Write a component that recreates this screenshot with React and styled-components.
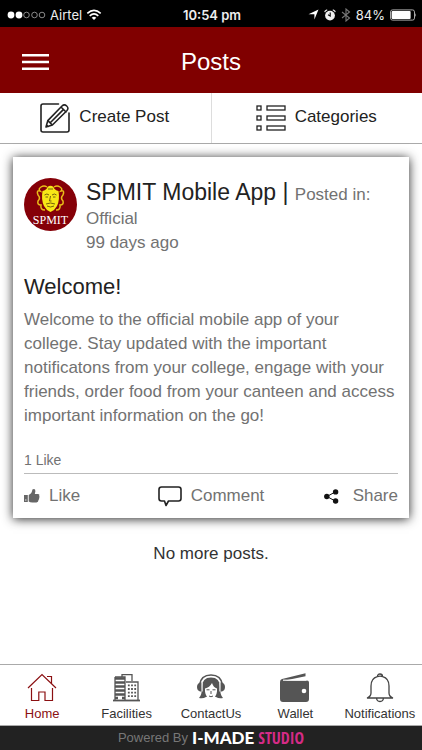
import React from "react";
import styled, { createGlobalStyle } from "styled-components";

const GlobalStyle = createGlobalStyle`
  * { box-sizing: border-box; }
  body { margin: 0; background: #fff; font-family: "Liberation Sans", Arial, sans-serif; color: #222; }
  button { font: inherit; color: inherit; background: none; border: 0; padding: 0; cursor: pointer; }
  h1, h2, h3, p { margin: 0; font-weight: 400; }
  a { text-decoration: none; color: inherit; }
  svg { display: block; flex: none; }
`;

const Page = styled.div`
  display: flex;
  flex-direction: column;
  min-height: 100vh;
`;

const StatusBar = styled.div`
  display: grid;
  grid-template-columns: 1fr auto 1fr;
  align-items: center;
  height: 27px;
  padding: 2px 5px 0 7px;
  background: #000;
  color: #eee;
  font-family: Inter, "Liberation Sans", sans-serif;
  font-size: 13px;
`;

const StatusGroup = styled.div`
  display: flex;
  align-items: center;
  justify-content: ${(p) => (p.$end ? "flex-end" : "flex-start")};
  gap: ${(p) => (p.$end ? 5 : 4)}px;
`;

const Clock = styled.span`
  font-weight: 600;
`;

const Header = styled.header`
  display: grid;
  grid-template-columns: 70px 1fr 70px;
  align-items: center;
  height: 66px;
  padding-top: 3px;
  background: #800000;
  color: #fff;
`;

const MenuButton = styled.button`
  justify-self: center;
`;

const PageTitle = styled.h1`
  text-align: center;
  font-size: 24px;
  line-height: 32px;
`;

const Actions = styled.div`
  display: flex;
  height: 51px;
  border-bottom: 1px solid #aaa;
`;

const ActionButton = styled.button`
  flex: 1;
  display: flex;
  align-items: center;
  justify-content: center;
  gap: 9px;
  padding-right: 1px;
  font-size: 17px;
  line-height: 24px;

  & + & { border-left: 1px solid #ddd; }
`;

const ActionLabel = styled.span`
  padding-bottom: 3px;
`;

const Feed = styled.main`
  flex: 1;
  padding: 13px 13px 24px;
`;

const Card = styled.article`
  padding: 21px 11px 10px;
  background: #fff;
  box-shadow: 0 1px 10px rgba(0, 0, 0, 0.85);
`;

const PostHead = styled.div`
  display: flex;
  gap: 9px;
`;

const PostMeta = styled.div`
  flex: 1;
  font-size: 17px;
  line-height: 24px;
  color: #727272;
`;

const Author = styled.span`
  font-size: 23px;
  line-height: 28px;
  color: #222;
`;

const PostTitle = styled.h2`
  margin-top: 18px;
  font-size: 22px;
  line-height: 28px;
`;

const PostBody = styled.p`
  margin-top: 7px;
  font-size: 17px;
  line-height: 24px;
  color: #727272;
`;

const LikeCount = styled.p`
  margin-top: 22px;
  padding-bottom: 3px;
  border-bottom: 1px solid #bbb;
  font-size: 14px;
  line-height: 20px;
  color: #727272;
`;

const PostActions = styled.div`
  display: grid;
  grid-template-columns: 1fr auto 1fr;
  margin-top: 10px;
`;

const PostButton = styled.button`
  display: flex;
  align-items: center;
  gap: ${(p) => p.$gap || 9}px;
  justify-self: ${(p) => (p.$end ? "end" : "start")};
  font-size: 17px;
  line-height: 24px;
  color: #727272;
`;

const EndNote = styled.p`
  margin-top: 24px;
  text-align: center;
  font-size: 17px;
  line-height: 24px;
  color: #333;
`;

const TabBar = styled.nav`
  display: flex;
  height: 62px;
  border-top: 1px solid #aaa;
  border-bottom: 1px solid #aaa;
`;

const Tab = styled.a`
  flex: 1 1 0;
  min-width: 0;
  display: flex;
  flex-direction: column;
  align-items: center;
  gap: 3px;
  padding-top: 8px;
  font-size: 13px;
  line-height: 16px;
  white-space: nowrap;
  color: #333;

  &[aria-current="page"] { color: #8b1012; }
`;

const Footer = styled.footer`
  display: flex;
  align-items: center;
  justify-content: center;
  gap: 4px;
  height: 24px;
  background: #222;
  font-size: 13px;
  line-height: 20px;
  color: #777;
`;

const Brand = styled.strong`
  display: flex;
  align-items: center;
  gap: 4px;
  font-family: Lato, "Open Sans", sans-serif;
  font-size: 17px;
  font-weight: 900;
  color: #fff;
`;

const BrandAccent = styled.span`
  font-family: "Liberation Sans Narrow", "Open Sans Condensed", "Liberation Sans", sans-serif;
  font-size: 16px;
  font-weight: 700;
  color: #d62b87;
`;

const Signal = () => (
  <svg width="39" height="8" viewBox="0 0 39 8" aria-label="Signal">
    {[4, 12, 19.5, 27.5, 35].map((x, i) => (
      <circle key={x} cx={x} cy="4" r={i < 2 ? 3.4 : 2.8} fill={i < 2 ? "#fff" : "none"} stroke={i < 2 ? "none" : "#aaa"} strokeWidth=".8" />
    ))}
  </svg>
);

const Wifi = () => (
  <svg width="16" height="12" viewBox="0 0 16 12" fill="none" stroke="#fff" strokeWidth="1.6">
    <path d="M1.3 4.3Q8-1.7 14.7 4.3M3.7 6.9Q8 3 12.3 6.9" />
    <path d="M8 11 5.7 8.7Q8 6.8 10.3 8.7Z" fill="#fff" stroke="none" />
  </svg>
);

const LocationArrow = () => (
  <svg width="11" height="11" viewBox="0 0 11 11"><path d="M10.5.5 6.4 10.5V5.2H.5Z" fill="#fff" /></svg>
);

const Alarm = () => (
  <svg width="12" height="12" viewBox="0 0 12 12">
    <circle cx="6" cy="6.6" r="4.9" fill="#eee" />
    <path d="M.7 3.2Q1 1.2 3.2.8M8.8.8Q11 1.2 11.3 3.2" fill="none" stroke="#ddd" strokeWidth="1.2" />
    <path d="M6.2 3.5V7L4 5.8" fill="none" stroke="#000" strokeWidth="1.1" />
  </svg>
);

const Bluetooth = () => (
  <svg width="10" height="14" viewBox="0 0 10 14"><path d="M1 4 8.5 10 5 13V1l3.5 3L1 10" fill="none" stroke="#777" strokeWidth="1.1" /></svg>
);

const Battery = () => (
  <svg width="27" height="12" viewBox="0 0 27 12">
    <rect x=".5" y=".9" width="24" height="10.2" rx="2" fill="none" stroke="#aaa" />
    <rect x="1.6" y="2" width="19" height="8" rx="1" fill="#fff" />
    <path d="M25.4 4q1.4 2 0 4Z" fill="#ccc" />
  </svg>
);

const MenuIcon = () => (
  <svg width="28" height="18" viewBox="0 0 28 18"><path d="M1 2.3H28M1 9H28M1 15.7H28" stroke="#fff" strokeWidth="2.4" /></svg>
);

const EditIcon = () => (
  <svg width="30" height="30" viewBox="0 0 30 30" fill="none" stroke="#222" strokeWidth="1.6" strokeLinejoin="round" strokeLinecap="round">
    <path d="M18.5 1H3Q1 1 1 3V27Q1 29 3 29H27Q29 29 29 27V10" />
    <path d="M6 24 7.8 17.6 22 3Q24.3.8 26.7 3T26.8 7.7L12.4 22ZM7.8 17.6l4.6 4.4M21 4l5 5M10.5 19.5 22.8 7.1M6.6 22l1.6 1.5" />
  </svg>
);

const ListIcon = () => (
  <svg width="30" height="26" viewBox="0 0 30 26" fill="none" stroke="#222" strokeWidth="1.3">
    {[1, 11, 21].map((y) => (
      <React.Fragment key={y}>
        <rect x="1" y={y} width="4" height="4" />
        <rect x="11" y={y} width="18" height="4" />
      </React.Fragment>
    ))}
  </svg>
);

const Crest = () => (
  <svg width="53" height="53" viewBox="0 0 53 53" role="img" aria-label="SPMIT">
    <circle cx="26.5" cy="26.5" r="26.5" fill="#850008" />
    <path d="M18.5 13q4-1 5-4 3-2.5 6 0 1 3 5 4 1.5 9-1.500 15-2 4-6.500 6-4.500-2-6.500-6-3-6-1.500-15Z" fill="#f7e716" />
    <path d="M23 9q-3-2-6 0t-1 4q-4-1-2 4 3 3 0 6-1 4 3 4-1 5 4 5M30 9q3-2 6 0t1 4q4-1 2 4-3 3 0 6 1 4-3 4 1 5-4 5" fill="none" stroke="#e9bd18" strokeWidth="1.5" />
    <path d="M20.500 17q2.500-2 4.500 0M28 17q2.500-2 4.500 0M21.500 19h2.500M29 19h2.500M26.500 18l-1 5h2M22 26q4.500-2 9 0M23 28q3.500 2 7 0M24 11h5" fill="none" stroke="#65500d" strokeWidth=".9" />
    <text x="26.5" y="45.500" textAnchor="middle" fill="#fff" fontFamily="Liberation Serif, serif" fontSize="12">SPMIT</text>
  </svg>
);

const ThumbIcon = () => (
  <svg width="16" height="16" viewBox="0 0 16 16" fill="#666">
    <path d="M0 7h3.8v7H0ZM4.7 7Q8 5.5 8.4 1.5 11.4.2 11.4 3.2L10.8 6H14q2 .2 1.2 2 .8 1-.1 2 .4 1.2-.6 2-.1 2.200-2 2.400H8.400Q6 14.200 4.700 13.400Z" />
    <path d="M1.2 12h1.2" stroke="#fff" />
  </svg>
);

const CommentIcon = () => (
  <svg width="24" height="21" viewBox="0 0 24 21" fill="none" stroke="#222" strokeWidth="1.6" strokeLinejoin="round">
    <path d="M3.5 1H20.5Q23 1 23 3.5V12.5Q23 15 20.5 15H10.5L8 19.5 6.5 15H3.5Q1 15 1 12.5V3.5Q1 1 3.5 1Z" />
  </svg>
);

const ShareIcon = () => (
  <svg width="15" height="15" viewBox="0 0 15 15" fill="#111">
    <path d="M11.5 2.8 3 7.5l8.5 4.7" fill="none" stroke="#111" />
    <circle cx="11.6" cy="2.9" r="2.7" /><circle cx="2.8" cy="7.5" r="2.7" /><circle cx="11.6" cy="12" r="2.7" />
  </svg>
);

const HomeIcon = () => (
  <svg width="30" height="30" viewBox="0 0 30 30" fill="none" stroke="currentColor" strokeWidth="1.2">
    <path d="M1 15 15 1.500l14 13.500M4.5 15v12.500h7.300V19H18v8.500h7.500V15M20 3.500h4.500v7" />
  </svg>
);

const BuildingIcon = () => (
  <svg width="28" height="30" viewBox="0 0 28 30" fill="none" stroke="#555" strokeWidth="1.3">
    <path d="M9 4V1.700h10V8" />
    <path d="M2 4h10v23M2 4v23M13 9h12v18" />
    <path d="M2 5.500h10M2 9.500h10M2 13.500h10M2 17.500h10M2 21.500h10M2 25h3M9 25h3" strokeWidth="2.7" />
    <path d="M15.800 11.500v14M19 11.500v14M22.200 11.500v14" strokeWidth="1.8" strokeDasharray="1.8 1.8" />
    <path d="M0 27.500h27" strokeWidth="1.8" />
  </svg>
);

const ContactIcon = () => (
  <svg width="30" height="30" viewBox="0 0 30 30">
    <path d="M6 14Q6 4.500 15 4.500T24 14q0 8 3 11-4 1-7-1H10q-3 2-7 1 3-3 3-11Z" fill="#555" />
    <path d="M9 15.500q4.500-1 7-5.500 1.500 4.500 5 5.500v3q-.6 6-6 8.500-5.400-2.500-6-8.500Z" fill="#fff" />
    <path d="M3.500 12Q5 2 15 2t11.500 10" fill="none" stroke="#555" strokeWidth="1.600" />
    <path d="M5.500 9.500v9H4q-3-1-3-4.500t3-4.500ZM24.500 9.500v9H26q3-1 3-4.500t-3-4.500Z" fill="#555" />
    <path d="M6.300 10v8.500M23.700 10v8.500" stroke="#fff" strokeWidth=".8" />
    <path d="M10.500 16.800h3M16.500 16.800h3M15 18v3M13 23q2 1.500 4 0" fill="none" stroke="#555" />
  </svg>
);

const WalletIcon = () => (
  <svg width="30" height="30" viewBox="0 0 30 30" fill="#555">
    <path d="M2 6 25.500.3v3L5 7.500H27q2 0 2 2V26q0 3-3 3H3q-3 0-3-3V9q0-2.500 2-3Z" />
    <path d="M3 7.200h23.500" stroke="#fff" strokeWidth="1.100" /><circle cx="24" cy="18" r="2.300" fill="#fff" />
  </svg>
);

const BellIcon = () => (
  <svg width="28" height="30" viewBox="0 0 28 30" fill="none" stroke="#444" strokeWidth="1.300">
    <path d="M11.500 3.500Q11.500 1 14 1t2.500 2.500M11.300 3.700Q5 5.500 5 13v7q0 3.500-4 5h26q-4-1.500-4-5v-7q0-7.500-6.300-9.300M11.300 3.700q2.700-1.200 5.400 0M10.500 25q.3 3.500 3.500 3.500t3.500-3.500" />
  </svg>
);

const tabs = [
  ["Home", HomeIcon],
  ["Facilities", BuildingIcon],
  ["ContactUs", ContactIcon],
  ["Wallet", WalletIcon],
  ["Notifications", BellIcon],
];

export default function App() {
  return (
    <Page>
      <GlobalStyle />
      <StatusBar>
        <StatusGroup><Signal /><span>Airtel</span><Wifi /></StatusGroup>
        <Clock>10:54 pm</Clock>
        <StatusGroup $end><LocationArrow /><Alarm /><Bluetooth /><span>84%</span><Battery /></StatusGroup>
      </StatusBar>
      <Header>
        <MenuButton aria-label="Menu"><MenuIcon /></MenuButton>
        <PageTitle>Posts</PageTitle>
      </Header>
      <Actions>
        <ActionButton><EditIcon /><ActionLabel>Create Post</ActionLabel></ActionButton>
        <ActionButton><ListIcon /><ActionLabel>Categories</ActionLabel></ActionButton>
      </Actions>
      <Feed>
        <Card>
          <PostHead>
            <Crest />
            <PostMeta>
              <p><Author>SPMIT Mobile App | </Author>Posted in: Official</p>
              <p>99 days ago</p>
            </PostMeta>
          </PostHead>
          <PostTitle>Welcome!</PostTitle>
          <PostBody>
            Welcome to the official mobile app of your college. Stay updated with the important
            notificatons from your college, engage with your friends, order food from your canteen
            and access important information on the go!
          </PostBody>
          <LikeCount>1 Like</LikeCount>
          <PostActions>
            <PostButton><ThumbIcon />Like</PostButton>
            <PostButton><CommentIcon />Comment</PostButton>
            <PostButton $end $gap={14}><ShareIcon />Share</PostButton>
          </PostActions>
        </Card>
        <EndNote>No more posts.</EndNote>
      </Feed>
      <TabBar>
        {tabs.map(([label, Icon], i) => (
          <Tab key={label} href="#" aria-current={i === 0 ? "page" : undefined}><Icon />{label}</Tab>
        ))}
      </TabBar>
      <Footer>
        <span>Powered By</span>
        <Brand>I-MADE <BrandAccent>STUDIO</BrandAccent></Brand>
      </Footer>
    </Page>
  );
}
